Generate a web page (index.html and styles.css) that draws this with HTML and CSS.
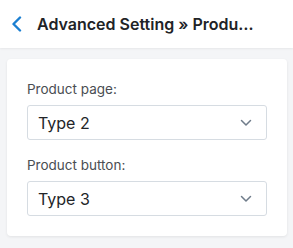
FILE: index.html
```html
<!DOCTYPE html>
<html>
<head>
<meta charset="utf-8">
<link rel="stylesheet" href="styles.css">
</head>
<body>
<header class="topbar">
  <svg class="back" width="12" height="16" viewBox="0 0 12 16"><path d="M9 1.5 L2.5 8 L9 14.5" fill="none" stroke="#1b7fd1" stroke-width="2.4" stroke-linecap="round" stroke-linejoin="round"/></svg>
  <div class="title">Advanced Setting » Produ…</div>
</header>
<main class="content">
  <section class="card">
    <div class="field">
      <label class="label">Product page:</label>
      <div class="select"><span>Type 2</span><svg width="12" height="8" viewBox="0 0 12 8"><path d="M1.5 1.5 L6 6 L10.5 1.5" fill="none" stroke="#6f7c8a" stroke-width="1.5" stroke-linecap="round" stroke-linejoin="round"/></svg></div>
    </div>
    <div class="field">
      <label class="label">Product button:</label>
      <div class="select"><span>Type 3</span><svg width="12" height="8" viewBox="0 0 12 8"><path d="M1.5 1.5 L6 6 L10.5 1.5" fill="none" stroke="#6f7c8a" stroke-width="1.5" stroke-linecap="round" stroke-linejoin="round"/></svg></div>
    </div>
  </section>
</main>
</body>
</html>
```
FILE: styles.css
```css
html, body { margin: 0; padding: 0; }
body {
  background: #f4f5f7;
  font-family: Inter, Roboto, "Liberation Sans", sans-serif;
  width: 293px;
  height: 248px;
  overflow: hidden;
}
.topbar {
  height: 48px;
  background: #fff;
  display: flex;
  align-items: center;
  padding-left: 11px;
  box-shadow: 0 1px 2px rgba(0,0,0,0.06);
}
.back { flex: none; margin-right: 14px; }
.title {
  font-size: 16px;
  font-weight: 600;
  color: #212326;
  white-space: nowrap;
}
.content { padding: 11px 6px 0 7px; }
.card {
  background: #fff;
  border-radius: 4px;
  box-shadow: 0 1px 3px rgba(0,0,0,0.08);
  padding: 22px 20px 20px 20px;
  display: flex;
  flex-direction: column;
  gap: 17px;
}
.field { display: flex; flex-direction: column; gap: 7px; }
.label { font-size: 13.5px; color: #4a4d52; line-height: 17px; }
.select {
  height: 33px;
  border: 1px solid #d6dce2;
  border-radius: 3px;
  display: flex;
  align-items: center;
  justify-content: space-between;
  padding: 0 14px 0 10px;
  font-size: 16px;
  color: #232528;
}
```
